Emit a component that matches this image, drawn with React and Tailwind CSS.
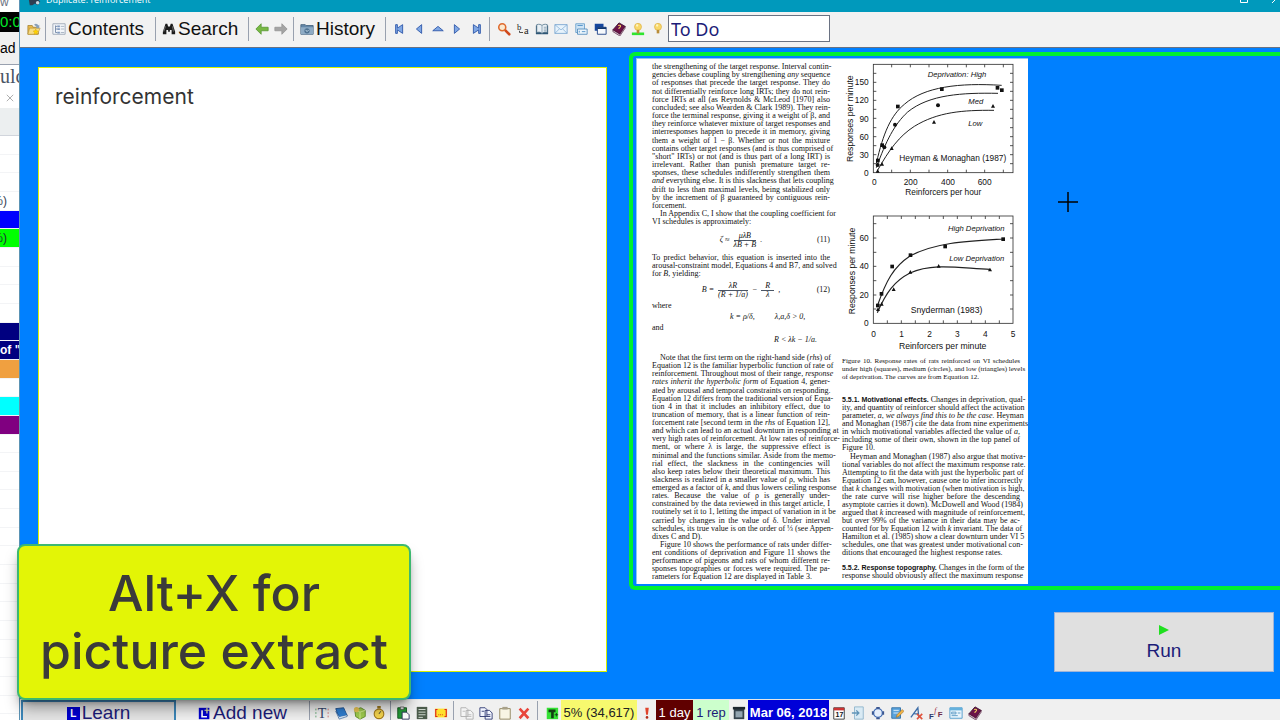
import React, { useState } from 'react';

const Icon = ({ children, size = 'size-[14px]' }) => (
  <svg viewBox="0 0 16 16" className={`${size} shrink-0`} aria-hidden="true">{children}</svg>
);

const FolderIcon = () => (
  <Icon>
    <path d="M1 4h5l1 2h6v8H1z" fill="#e9b949" stroke="#9c7a2a" strokeWidth=".8" />
    <path d="M3 7h12l-3 7H1z" fill="#f7dc83" stroke="#b08a30" strokeWidth=".6" />
    <path d="M8 3c2-2 4-1 5 1l1-1v4h-4l1-1c-1-2-2-2-3-3z" fill="#8aa0b8" />
    <path d="M10 8l1 2 2 .3-1.5 1.5.4 2.2-1.9-1-1.900 1 .4-2.200L7 10.300 9 10z" fill="#ffd500" stroke="#d09a00" strokeWidth=".4" />
  </Icon>
);

const TreeIcon = () => (
  <Icon>
    <path d="M1 2h14v12H1z" fill="#f3f6fa" stroke="#9aa5b5" />
    <path d="M4 4v8M4 5h2M4 8h2M4 12h2" stroke="#7186a3" fill="none" />
    <path d="M6 4h3v2H6zM6 7h3v2H6zM6 11h3v2H6z" fill="#7f98bd" />
    <path d="M10 5h4M10 8h4M10 12h4" stroke="#a3afbf" />
  </Icon>
);

const BinocularsIcon = () => (
  <Icon>
    <path d="M4 2h2l1 3h2l1-3h2l3 9v3h-4V9H9v2H7V9H5v5H1v-3z" fill="#1c1c1c" />
    <path d="M4 5l-2 6M12 5l1 6" stroke="#8b8b8b" strokeWidth=".8" />
  </Icon>
);

const BackIcon = () => (
  <Icon><path d="M1 8l6-6v4h8v4H7v4z" fill="#78b843" stroke="#5c9a38" /></Icon>
);

const ForwardIcon = () => (
  <Icon><path d="M15 8L9 2v4H1v4h8v4z" fill="#a4a4a4" stroke="#979797" /></Icon>
);

const HistoryIcon = () => (
  <Icon>
    <path d="M1 3h5l1 1h8v10H1z" fill="#6487a8" stroke="#48657f" />
    <path d="M1 6h14v8H1z" fill="#8eabc5" />
    <circle cx="8" cy="10" r="3" fill="#4e7292" />
    <path d="M6.500 9l1.500 2 2-2" stroke="#c8dcec" fill="none" />
  </Icon>
);

const NAV_PATHS = [
  ['First', 'M3 3h2v4l6-4v10L5 9v4H3z'],
  ['Previous', 'M11 3v10L5 8z'],
  ['Up', 'M2 10l6-5 6 5z'],
  ['Next', 'M5 3v10l6-5z'],
  ['Last', 'M13 3h-2v4L5 3v10l6-4v4h2z'],
];

const BookIcon = () => (
  <Icon>
    <path d="M8 1l7 4-6 9-8-5z" fill="#6b1248" stroke="#390a28" />
    <path d="M1 9l8 5 6-9v2l-6 9-8-5z" fill="#d9c3d0" stroke="#491033" strokeWidth=".7" />
    <path d="M7 4c3-1 4 1 1 3v1" stroke="#f0d060" strokeWidth="1.300" fill="none" />
  </Icon>
);

const BulbIcon = ({ lit }) => (
  <Icon>
    {lit && <path d="M1 12h14v3H1z" fill="#2fe52f" />}
    <circle cx="8" cy="5.500" r="4" fill="#f8d86a" stroke="#d9a93c" strokeWidth=".7" />
    <path d="M6.500 9h3v4h-3z" fill="#b98c38" />
    <circle cx="7" cy="4" r="1.300" fill="#fff4c0" />
  </Icon>
);

const TOOL_ICONS = [
  ['Find', (
    <Icon key="f">
      <path d="M9 9l5 5" stroke="#d0491c" strokeWidth="3" strokeLinecap="round" />
      <circle cx="6" cy="6" r="4" fill="#fbe9d0" stroke="#df6a2d" strokeWidth="1.800" />
    </Icon>
  )],
  ['Replace', (
    <Icon key="r">
      <text x="1" y="9" fontSize="10" fontFamily="Liberation Serif" fill="#222">b</text>
      <text x="9" y="14" fontSize="12" fontFamily="Liberation Serif" fill="#222">a</text>
      <path d="M4 10v2h4" stroke="#333" fill="none" />
    </Icon>
  )],
  ['Read', (
    <Icon key="o">
      <path d="M1 4h14v10H1z" fill="#2d5675" />
      <path d="M2 3c3-1 5 0 6 1 1-1 3-2 6-1v9c-3-1-5 0-6 1-1-1-3-2-6-1z" fill="#e9f0f5" stroke="#456780" strokeWidth=".8" />
      <path d="M8 4v9M10 6h3M10 8h3M10 10h3" stroke="#718ba0" strokeWidth=".8" />
    </Icon>
  )],
  ['Mail', (
    <Icon key="m">
      <path d="M1 3h14v10H1z" fill="#e7f3fc" stroke="#7ba7d1" />
      <path d="M1 3l7 6 7-6M1 13l5-5M15 13l-5-5" fill="none" stroke="#7ba7d1" strokeWidth=".8" />
    </Icon>
  )],
  ['Templates', (
    <Icon key="t">
      <path d="M2 2h10v10H2z" fill="#cfe4f5" stroke="#6ba0cc" />
      <path d="M4 8h11v6H4z" fill="#edf6fc" stroke="#528cbc" />
      <path d="M4 4h6M6 10v2M9 11h4" stroke="#4c8ec6" />
    </Icon>
  )],
  ['Windows', (
    <Icon key="w">
      <path d="M2 2h10v8H2z" fill="#16479d" />
      <path d="M5 6h10v8H5z" fill="#f5f8fc" stroke="#173c83" />
      <path d="M5 6h10v2H5z" fill="#11376f" />
    </Icon>
  )],
  ['Manual', <BookIcon key="b" />],
  ['Lit hint', <BulbIcon key="l" lit />],
  ['Hint', <BulbIcon key="h" />],
];

const BOTTOM_GROUPS = [
  [
    ['Text', (
      <Icon key="t">
        <text x="3" y="14" fontSize="16" fontFamily="Liberation Serif" fill="#35456a">T</text>
        <path d="M1 3v10" stroke="#58a26a" strokeDasharray="2 2" />
        <path d="M15 3v10" stroke="#d07070" strokeDasharray="2 2" />
      </Icon>
    )],
    ['Books', (
      <Icon key="b">
        <path d="M2 3l9-1 4 9-9 3z" fill="#2f7ed0" stroke="#174a8c" />
        <path d="M6 12l9-2v2l-9 3-4-9z" fill="#d6e8f8" stroke="#174a8c" strokeWidth=".6" />
        <path d="M3 4l8-1 3 7-7 2z" fill="#2f7ed0" />
      </Icon>
    )],
    ['Package', (
      <Icon key="p">
        <path d="M2 4l7-2 5 3v7l-6 3-5-3z" fill="#9fcb4e" stroke="#5d8a25" />
        <path d="M2 4l6 3 6-2M8 7v8" stroke="#d7ef93" fill="none" />
        <circle cx="4" cy="4" r="3" fill="#e8c553" />
      </Icon>
    )],
    ['Timer', (
      <Icon key="c">
        <path d="M6 0h4v3H6z" fill="#9c7a20" />
        <circle cx="8" cy="9" r="5.500" fill="#f4d44d" stroke="#a47c1c" strokeWidth="1.300" />
        <path d="M8 9l2-3" stroke="#333" />
      </Icon>
    )],
  ],
  [
    ['Paste', (
      <Icon key="p">
        <path d="M2 2h10v12H2z" fill="#239a37" stroke="#11501d" />
        <path d="M5 1h4v3H5z" fill="#d8d8d8" stroke="#333" strokeWidth=".6" />
        <path d="M7 7h5l3 3v5H7z" fill="#fff" stroke="#222b55" />
      </Icon>
    )],
    ['Article', (
      <Icon key="a">
        <path d="M2 1h12v14H2z" fill="#4c5c4c" />
        <path d="M4 4h8M4 7h8M4 10h8M4 13h5" stroke="#dfe8df" />
      </Icon>
    )],
    ['Cloze', (
      <Icon key="c">
        <path d="M1 3h14v10H1z" fill="#ffe02a" />
        <path d="M4 4H2v8h2M12 4h2v8h-2" fill="none" stroke="#d22" strokeWidth="1.300" />
        <path d="M5 10h6" stroke="#d22" strokeDasharray="1 1" />
      </Icon>
    )],
  ],
  [
    ['Duplicate', (
      <Icon key="d">
        <path d="M1 2h6l2 2v8H1zM7 5h5l3 3v7H7z" fill="#f4f4f4" stroke="#ababab" />
        <path d="M3 6h3M9 10h4M9 12h4" stroke="#b9b9b9" />
      </Icon>
    )],
    ['Copy', (
      <Icon key="c">
        <path d="M1 2h6l2 2v8H1zM7 5h5l3 3v7H7z" fill="#f2f5ff" stroke="#2a356e" />
        <path d="M3 6h3M9 10h4M9 12h4" stroke="#2a356e" />
      </Icon>
    )],
    ['Clipboard', (
      <Icon key="b">
        <path d="M2 3h12v12H2z" fill="#f8f5e4" stroke="#8d8158" />
        <path d="M5 1h6v3H5z" fill="#a8a18a" />
      </Icon>
    )],
    ['Delete', (
      <Icon key="x"><path d="M3 3l10 11M13 3L3 14" stroke="#e8453c" strokeWidth="3" /></Icon>
    )],
  ],
];

const END_ICONS = [
  ['Calendar', (
    <Icon key="c">
      <path d="M2 2h12v13H2z" fill="#fff" stroke="#333" />
      <path d="M2 2h12v3H2z" fill="#c33" />
      <text x="4" y="13" fontSize="8" fontWeight="bold" fontFamily="Liberation Sans" fill="#111">17</text>
    </Icon>
  )],
  ['Import', (
    <Icon key="i">
      <path d="M4 1h10v14H4z" fill="#d9eaf4" stroke="#8eb4cc" />
      <path d="M1 8h7M6 5l3 3-3 3" stroke="#5f94b8" fill="none" strokeWidth="1.500" />
    </Icon>
  )],
  ['Target', (
    <Icon key="t">
      <circle cx="8" cy="8" r="5" fill="#e5eefb" stroke="#3d69b3" strokeWidth="1.500" />
      <path d="M6 1h4v2H6zM6 13h4v2H6zM1 6h2v4H1zM13 6h2v4h-2z" fill="#3b568f" />
    </Icon>
  )],
  ['Edit', (
    <Icon key="e">
      <path d="M2 2h10v12H2z" fill="#5ba4dd" stroke="#2e6ea5" />
      <path d="M4 5h6M4 8h6" stroke="#e3f1fb" />
      <path d="M7 13l1-3 6-6 2 2-6 6z" fill="#f0b345" stroke="#94672a" strokeWidth=".6" />
    </Icon>
  )],
  ['Clear font', (
    <Icon key="a">
      <path d="M1 13L9 2l1 11M5 9h5" fill="none" stroke="#3d6da8" strokeWidth="1.500" />
      <path d="M8 9l6 6M14 9l-6 6" stroke="#e0523c" strokeWidth="1.800" />
    </Icon>
  )],
  ['Fonts', (
    <Icon key="f">
      <text x="0" y="15" fontSize="9" fontWeight="bold" fontFamily="Liberation Sans" fill="#2b3569">F</text>
      <text x="6" y="8" fontSize="9" fontStyle="italic" fontFamily="Liberation Serif" fill="#9b2b4a">f</text>
      <text x="10" y="12" fontSize="9" fontWeight="bold" fontFamily="Liberation Sans" fill="#6d2b4a">F</text>
    </Icon>
  )],
  ['Layout', (
    <Icon key="l">
      <path d="M1 2h14v12H1z" fill="#e8f4fc" stroke="#4c9acb" />
      <path d="M1 2h14v3H1z" fill="#65b1dd" />
      <path d="M3 7h5v2H3zM3 11h7M10 8h3" stroke="#5797c2" fill="none" />
    </Icon>
  )],
  ['Help', <BookIcon key="h" />],
];

const SIDE_ROWS = Array.from({ length: 32 }, () => ({ cls: 'bg-white', text: '' }));
SIDE_ROWS[3] = { cls: 'justify-end bg-white pr-3 text-gray-700', text: '%)' };
SIDE_ROWS[4] = { cls: 'bg-[#0000ff]', text: '' };
SIDE_ROWS[5] = { cls: 'justify-end bg-[#00ff00] pr-3 text-gray-800', text: '%)' };
SIDE_ROWS[10] = { cls: 'bg-[#000080]', text: '' };
SIDE_ROWS[11] = { cls: 'bg-[#000080] font-bold text-white', text: 'of "' };
SIDE_ROWS[12] = { cls: 'bg-[#f0a040]', text: '' };
SIDE_ROWS[14] = { cls: 'bg-[#00ffff]', text: '' };
SIDE_ROWS[15] = { cls: 'bg-[#800080]', text: '' };

const Sidebar = () => (
  <aside className="flex w-5 shrink-0 flex-col overflow-hidden border-r border-[#5a93b5] bg-white">
    <div className="h-3 text-[12px] leading-[4px] text-gray-500">w</div>
    <div className="h-5 overflow-hidden bg-black text-[15px] leading-5 whitespace-nowrap text-[#00e828]">0:0</div>
    <div className="flex h-8 items-center bg-[#f0f0f0] text-[14px] text-black">ad</div>
    <div className="flex h-6 items-end overflow-hidden border-t border-gray-400 font-['Liberation_Serif',serif] text-[20px] leading-6 text-gray-600">ulc</div>
    <div className="flex h-5 items-center justify-center">
      <svg viewBox="0 0 10 10" className="size-2" aria-hidden="true">
        <path d="M1 1l8 8M9 1L1 9" stroke="#999" />
      </svg>
    </div>
    <div className="h-7 shrink-0 border-b border-gray-300 bg-[#eceff0]" />
    <div className="-mb-[13px] flex flex-1 flex-col">
      {SIDE_ROWS.map((row, i) => (
        <div key={i} className={`flex flex-1 items-center overflow-hidden border-b border-gray-100 text-[12px] leading-4 whitespace-nowrap ${row.cls}`}>
          {row.text}
        </div>
      ))}
    </div>
  </aside>
);

const Group = ({ className, children }) => (
  <div className={`flex h-6 shrink-0 items-center border-r border-gray-400 ${className}`}>{children}</div>
);

const IconButton = ({ label, children, className = '' }) => (
  <button type="button" aria-label={label} className={`flex w-[19px] shrink-0 items-center justify-center ${className}`}>
    {children}
  </button>
);

const Toolbar = ({ title, onTitleChange }) => (
  <div className="flex h-9 shrink-0 items-center border-b border-gray-500 bg-[#f2f2f2] pb-0.5 text-[19px] leading-6 text-[#111]">
    <Group className="w-[26px] pl-1"><IconButton label="Open"><FolderIcon /></IconButton></Group>
    <Group className="w-[110px] pl-1.5">
      <button type="button" className="flex items-center gap-0.5"><TreeIcon />Contents</button>
    </Group>
    <Group className="w-[93px] pl-1.5">
      <button type="button" className="flex items-center gap-0.5"><BinocularsIcon />Search</button>
    </Group>
    <Group className="w-[45px] justify-center">
      <IconButton label="Back"><BackIcon /></IconButton>
      <IconButton label="Forward"><ForwardIcon /></IconButton>
    </Group>
    <Group className="w-[92px] pl-1.5">
      <button type="button" className="flex items-center gap-0.5"><HistoryIcon />History</button>
    </Group>
    <Group className="w-[104px] pl-1">
      {NAV_PATHS.map(([label, d]) => (
        <IconButton key={label} label={label}>
          <Icon><path d={d} fill="#7fa7e4" stroke="#2b55a8" /></Icon>
        </IconButton>
      ))}
    </Group>
    <div className="flex w-[178px] shrink-0 justify-between pr-px pl-1">
      {TOOL_ICONS.map(([label, icon]) => <IconButton key={label} label={label}>{icon}</IconButton>)}
    </div>
    <input
      aria-label="Title"
      value={title}
      onChange={(e) => onTitleChange(e.target.value)}
      className="h-[27px] w-[162px] border border-gray-500 bg-white px-0.5 font-['Noto_Sans',sans-serif] text-[18px] text-[#1c1c78]"
    />
  </div>
);

// One printed line per entry; the last line of a paragraph may be short.
const Lines = ({ lines, indent, ragged, className = '' }) => (
  <p className={`flex flex-col justify-between ${className}`}>
    {lines.map((line, i) => (
      <span
        key={i}
        className={`block h-2 whitespace-nowrap ${indent && i === 0 ? 'pl-2' : ''} ${ragged && i === lines.length - 1 ? '' : '[text-align-last:justify]'}`}
      >
        {line}
      </span>
    ))}
  </p>
);

const RunIn = ({ children }) => (
  <b className="font-['Liberation_Sans',sans-serif] text-[7px]">{children}</b>
);

const Fraction = ({ top, bottom }) => (
  <span className="inline-flex flex-col text-center">
    <span className="border-b border-gray-600 px-1">{top}</span>
    <span>{bottom}</span>
  </span>
);

const Equation = ({ number, children, className }) => (
  <div className={`grid grid-cols-[1fr_auto_1fr] items-center ${className}`}>
    <span />
    <span className="flex items-center gap-1 italic">{children}</span>
    <span className="text-right">({number})</span>
  </div>
);

const P1 = [
  'the strengthening of the target response. Interval contin-',
  <>gencies debase coupling by strengthening <i>any</i> sequence</>,
  'of responses that precede the target response. They do',
  'not differentially reinforce long IRTs; they do not rein-',
  'force IRTs at all (as Reynolds & McLeod [1970] also',
  'concluded; see also Wearden & Clark 1989). They rein-',
  'force the terminal response, giving it a weight of β, and',
  'they reinforce whatever mixture of target responses and',
  'interresponses happen to precede it in memory, giving',
  'them a weight of 1 − β. Whether or not the mixture',
  'contains other target responses (and is thus comprised of',
  '"short" IRTs) or not (and is thus part of a long IRT) is',
  'irrelevant. Rather than punish premature target re-',
  'sponses, these schedules indifferently strengthen them',
  <><i>and</i> everything else. It is this slackness that lets coupling</>,
  'drift to less than maximal levels, being stabilized only',
  'by the increment of β guaranteed by contiguous rein-',
  'forcement.',
];

const P2 = [
  'In Appendix C, I show that the coupling coefficient for',
  'VI schedules is approximately:',
];

const P3 = [
  'To predict behavior, this equation is inserted into the',
  'arousal-constraint model, Equations 4 and B7, and solved',
  <>for <i>B</i>, yielding:</>,
];

const P4 = [
  <>Note that the first term on the right-hand side (<i>rhs</i>) of</>,
  'Equation 12 is the familiar hyperbolic function of rate of',
  <>reinforcement. Throughout most of their range, <i>response</i></>,
  <><i>rates inherit the hyperbolic form</i> of Equation 4, gener-</>,
  'ated by arousal and temporal constraints on responding.',
  'Equation 12 differs from the traditional version of Equa-',
  'tion 4 in that it includes an inhibitory effect, due to',
  'truncation of memory, that is a linear function of rein-',
  <>forcement rate [second term in the <i>rhs</i> of Equation 12],</>,
  'and which can lead to an actual downturn in responding at',
  'very high rates of reinforcement. At low rates of reinforce-',
  'ment, or where λ is large, the suppressive effect is',
  'minimal and the functions similar. Aside from the memo-',
  'rial effect, the slackness in the contingencies will',
  'also keep rates below their theoretical maximum. This',
  'slackness is realized in a smaller value of ρ, which has',
  <>emerged as a factor of <i>k</i>, and thus lowers ceiling response</>,
  'rates. Because the value of ρ is generally under-',
  'constrained by the data reviewed in this target article, I',
  'routinely set it to 1, letting the impact of variation in it be',
  'carried by changes in the value of δ. Under interval',
  'schedules, its true value is on the order of ⅓ (see Appen-',
  'dixes C and D).',
];

const P5 = [
  'Figure 10 shows the performance of rats under differ-',
  'ent conditions of deprivation and Figure 11 shows the',
  'performance of pigeons and rats of whom different re-',
  'sponses topographies or forces were required. The pa-',
  'rameters for Equation 12 are displayed in Table 3.',
];

const CAPTION = [
  'Figure 10.   Response rates of rats reinforced on VI schedules',
  'under high (squares), medium (circles), and low (triangles) levels',
  'of deprivation. The curves are from Equation 12.',
];

const P6 = [
  <><RunIn>5.5.1. Motivational effects.</RunIn> Changes in deprivation, qual-</>,
  'ity, and quantity of reinforcer should affect the activation',
  <>parameter, <i>a</i>, <i>we always find this to be the case.</i> Heyman</>,
  'and Monaghan (1987) cite the data from nine experiments',
  <>in which motivational variables affected the value of <i>a</i>,</>,
  'including some of their own, shown in the top panel of',
  'Figure 10.',
];

const P7 = [
  'Heyman and Monaghan (1987) also argue that motiva-',
  'tional variables do not affect the maximum response rate.',
  'Attempting to fit the data with just the hyperbolic part of',
  'Equation 12 can, however, cause one to infer incorrectly',
  <>that <i>k</i> changes with motivation (when motivation is high,</>,
  'the rate curve will rise higher before the descending',
  'asymptote carries it down). McDowell and Wood (1984)',
  <>argued that <i>k</i> increased with magnitude of reinforcement,</>,
  'but over 99% of the variance in their data may be ac-',
  <>counted for by Equation 12 with <i>k</i> invariant. The data of</>,
  'Hamilton et al. (1985) show a clear downturn under VI 5',
  'schedules, one that was greatest under motivational con-',
  'ditions that encouraged the highest response rates.',
];

const P8 = [
  <><RunIn>5.5.2. Response topography.</RunIn> Changes in the form of the</>,
  'response should obviously affect the maximum response',
];

const Square = ({ x, y }) => <rect x={x - 5} y={y - 5} width="11" height="11" fill="#111" />;
const Dot = ({ x, y }) => <circle cx={x} cy={y} r="6" fill="#111" />;
const Triangle = ({ x, y }) => <path d={`M${x} ${y - 6}l6 11h-12z`} fill="#111" />;

const Frame = ({ top, bottom, xTicks, yTicks }) => (
  <g stroke="#333" strokeWidth="2.500" fill="none">
    <rect x="112" y={top} width="419" height={bottom - top} />
    {xTicks.map((x) => <path key={x} d={`M${x} ${top}v9M${x} ${bottom}v-9`} />)}
    {yTicks.map((y) => <path key={y} d={`M112 ${y}h9M531 ${y}h-9`} />)}
  </g>
);

const HeymanChart = () => (
  <svg viewBox="18 9 540 426" className="h-[142px] w-[180px] font-['Liberation_Sans',sans-serif] text-[25px]" fill="#111" role="img" aria-label="Heyman & Monaghan (1987)">
    <Frame top={25} bottom={350} xTicks={[167, 223, 279, 335, 391, 446, 502]} yTicks={[52, 79, 106, 133, 160, 187, 215, 242, 269, 296, 323]} />
    <g textAnchor="end">
      <text x="98" y="88">150</text>
      <text x="98" y="142">120</text>
      <text x="98" y="197">90</text>
      <text x="98" y="251">60</text>
      <text x="98" y="305">30</text>
      <text x="98" y="359">0</text>
    </g>
    <g textAnchor="middle">
      <text x="115" y="386">0</text>
      <text x="224" y="386">200</text>
      <text x="336" y="386">400</text>
      <text x="446" y="386">600</text>
      <text x="322" y="416">Reinforcers per hour</text>
      <text transform="translate(50 188) rotate(-90)" className="text-[26px]">Responses per minute</text>
    </g>
    <g fill="none" stroke="#222" strokeWidth="3">
      <path d="M121 322C142 230 165 178 205 145C265 92 370 80 497 88" />
      <path d="M121 335C150 255 175 205 215 168C280 115 380 110 486 112" />
      <path d="M123 346C160 280 190 240 235 211C305 168 380 162 474 163" />
    </g>
    <text x="275" y="62" fontStyle="italic" className="text-[23px]">Deprivation:  High</text>
    <text x="397" y="143" fontStyle="italic" className="text-[23px]">Med</text>
    <text x="397" y="211" fontStyle="italic" className="text-[23px]">Low</text>
    <text x="190" y="316" className="text-[25px]">Heyman & Monaghan (1987)</text>
    <Square x={125} y={313} /><Square x={138} y={267} /><Square x={185} y={151} />
    <Square x={317} y={99} /><Square x={484} y={95} /><Square x={497} y={102} />
    <Dot x={125} y={327} /><Dot x={145} y={274} /><Dot x={177} y={206} /><Dot x={306} y={148} />
    <Triangle x={125} y={345} /><Triangle x={138} y={324} /><Triangle x={167} y={277} />
    <Triangle x={294} y={198} /><Triangle x={471} y={150} />
  </svg>
);

const SnydermanChart = () => (
  <svg viewBox="18 12 540 426" className="h-[142px] w-[180px] font-['Liberation_Sans',sans-serif] text-[25px]" fill="#111" role="img" aria-label="Snyderman (1983)">
    <Frame top={30} bottom={352} xTicks={[154, 196, 238, 280, 322, 364, 406, 448, 490]} yTicks={[53, 96, 139, 181, 224, 267, 309]} />
    <g textAnchor="end">
      <text x="98" y="105">60</text>
      <text x="98" y="190">40</text>
      <text x="98" y="276">20</text>
      <text x="98" y="361">0</text>
    </g>
    <g textAnchor="middle">
      <text x="113" y="392">0</text>
      <text x="197" y="392">1</text>
      <text x="281" y="392">2</text>
      <text x="364" y="392">3</text>
      <text x="448" y="392">4</text>
      <text x="531" y="392">5</text>
      <text x="320" y="428" className="text-[26px]">Reinforcers per minute</text>
      <text transform="translate(56 195) rotate(-90)" className="text-[26px]">Responses per minute</text>
    </g>
    <g fill="none" stroke="#222" strokeWidth="3.500">
      <path d="M124 300C150 225 172 183 222 150C300 108 400 105 502 99" />
      <path d="M124 320C150 260 175 225 222 201C290 170 370 186 462 190" />
    </g>
    <text x="336" y="74" fontStyle="italic" className="text-[23px]">High Deprivation</text>
    <text x="340" y="164" fontStyle="italic" className="text-[23px]">Low Deprivation</text>
    <text x="224" y="321" className="text-[26px]">Snyderman (1983)</text>
    <Square x={125} y={298} /><Square x={136} y={263} /><Square x={168} y={181} />
    <Square x={223} y={147} /><Square x={327} y={121} /><Square x={501} y={99} />
    <Triangle x={126} y={310} /><Triangle x={137} y={294} /><Triangle x={173} y={250} />
    <Triangle x={223} y={198} /><Triangle x={308} y={180} /><Triangle x={462} y={191} />
  </svg>
);

const Paper = () => (
  <article className="flex w-[392px] gap-3 border-t border-l border-[#8cc8f5] bg-white px-[15px] pt-1 pb-[3px] font-['Liberation_Serif',serif] text-[8px] leading-2 text-[#111]">
    <div className="flex w-[178px] shrink-0 flex-col">
      <Lines lines={P1} ragged className="h-[147px]" />
      <Lines lines={P2} indent ragged className="h-4" />
      <Equation number="11" className="my-1 h-5">ζ ≈ <Fraction top="μλB" bottom="λB + B" />.</Equation>
      <Lines lines={P3} ragged />
      <Equation number="12" className="h-6">
        B = <Fraction top="λR" bottom="(R + 1/a)" /> − <Fraction top="R" bottom="λ" />,
      </Equation>
      <p>where</p>
      <p className="mt-[3px] flex gap-5 pl-[78px] italic"><span>k = ρ/δ,</span><span>λ,a,δ {'>'} 0,</span></p>
      <p className="mt-[3px]">and</p>
      <p className="mt-1 pl-[122px] italic">R {'<'} λk − 1/a.</p>
      <Lines lines={P4} indent ragged className="mt-[10px] h-[187px]" />
      <Lines lines={P5} indent ragged />
    </div>
    <div className="flex w-[178px] shrink-0 flex-col">
      <div className="-mt-1 flex flex-col gap-[9px]">
        <HeymanChart />
        <SnydermanChart />
      </div>
      <Lines lines={CAPTION} ragged className="mt-[5px] text-[7px]" />
      <Lines lines={P6} ragged className="mt-[15px]" />
      <Lines lines={P7} indent ragged className="mt-px" />
      <Lines lines={P8} className="mt-[7px]" />
    </div>
  </article>
);

const BottomBar = () => (
  <div className="h-[21px] shrink-0 overflow-hidden border-t border-gray-200 bg-[#f0f0f0]">
    <div className="flex h-[26px] items-center text-[13px] text-[#1c1c78]">
      <button type="button" className="ml-px flex h-[26px] w-[155px] shrink-0 items-center justify-center gap-0.5 border-2 border-[#3c86b8] bg-[#e4e4e4] text-[19px]">
        <span className="flex size-[13px] items-center justify-center bg-[#0000d0] text-[10px] font-bold text-white">L</span>
        Learn
      </button>
      <Group className="w-[134px] justify-center">
        <button type="button" className="flex items-center gap-0.5 text-[19px]">
          <Icon size="size-[13px]">
            <path d="M1 1h13v14H1z" fill="#0000d0" />
            <path d="M5 4v8h6" fill="none" stroke="#fff" strokeWidth="2" />
            <path d="M11 1v7M8 4h7" stroke="#e8e8a0" strokeWidth="1.500" />
          </Icon>
          Add new
        </button>
      </Group>
      <Group className="w-[81px] justify-center">
        {BOTTOM_GROUPS[0].map(([label, icon]) => <IconButton key={label} label={label}>{icon}</IconButton>)}
      </Group>
      <Group className="w-[63px] justify-center">
        {BOTTOM_GROUPS[1].map(([label, icon]) => <IconButton key={label} label={label}>{icon}</IconButton>)}
      </Group>
      <Group className="w-[84px] justify-center">
        {BOTTOM_GROUPS[2].map(([label, icon]) => <IconButton key={label} label={label}>{icon}</IconButton>)}
      </Group>
      <IconButton label="Topic" className="ml-1">
        <Icon>
          <path d="M2 2h13v13H2z" fill="#35e135" />
          <path d="M4 4h8v3h-2v7H7V7H4z" fill="#133f13" />
          <path d="M11 10h4M13 8v4" stroke="#133f13" />
        </Icon>
      </IconButton>
      <span className="flex h-[26px] w-[76px] shrink-0 items-center justify-center bg-[#f7f96e] text-[#222]">5% (34,617)</span>
      <IconButton label="Priority">
        <Icon><path d="M6 2h4l-1 8H7z" fill="#e0442c" /><circle cx="8" cy="13" r="1.500" fill="#b22d1b" /></Icon>
      </IconButton>
      <span className="flex h-[26px] w-[37px] shrink-0 items-center justify-center bg-[#600000] text-white">1 day</span>
      <span className="flex h-[26px] w-[36px] shrink-0 items-center justify-center bg-[#ccffcc]">1 rep</span>
      <IconButton label="Archive">
        <Icon>
          <path d="M2 2h12v13H2z" fill="#35424d" />
          <path d="M1 1h14v3H1z" fill="#1d262e" />
          <path d="M4 6h8v7H4z" fill="#93a4b0" />
        </Icon>
      </IconButton>
      <span className="flex h-[26px] w-[81px] shrink-0 items-center justify-center bg-[#0000d8] font-bold text-white">Mar 06, 2018</span>
      <div className="flex w-[156px] shrink-0 justify-between">
        {END_ICONS.map(([label, icon]) => <IconButton key={label} label={label}>{icon}</IconButton>)}
      </div>
    </div>
  </div>
);

const App = () => {
  const [title, setTitle] = useState('To Do');

  return (
    <div className="relative flex h-screen overflow-hidden bg-white font-['Liberation_Sans',sans-serif]">
      <Sidebar />
      <main className="flex min-w-0 flex-1 flex-col">
        <header className="flex h-3 shrink-0 justify-between overflow-hidden bg-[#0099bc] pl-2">
          <div className="flex h-0 items-center gap-1 font-['Open_Sans',sans-serif] text-[9px] text-white">
            <Icon><path d="M1 8h6l2-3 5 5-3 4-3-2-3 2H2z" fill="#2d3e50" /><circle cx="11" cy="11" r="2" fill="#c8d8e0" /></Icon>
            <span>Duplicate: reinforcement</span>
          </div>
          <svg viewBox="0 0 40 12" className="h-3 w-10" fill="none" stroke="#fff" aria-hidden="true">
            <path d="M.5-4v6.500h7V-4M32 3l7-7" />
          </svg>
        </header>
        <Toolbar title={title} onTitleChange={setTitle} />
        <div className="grid min-h-0 flex-1 grid-cols-[minmax(0,569fr)_minmax(0,651fr)] gap-[22px] overflow-hidden bg-[#0080ff] pl-[18px]">
          <section className="mt-[19px] mb-[27px] border border-[#d8f000] bg-white px-4 py-[17px]">
            <p className="font-['Inter',sans-serif] text-[21px] leading-6 text-[#333]">reinforcement</p>
          </section>
          <section className="flex flex-col pt-1">
            <div className="rounded-l-md border-4 border-r-0 border-[#00f030] p-0.5 pl-[3px]">
              <Paper />
            </div>
            <button type="button" className="mt-[22px] mr-[6px] flex h-[60px] w-[220px] flex-col items-center justify-center self-end border border-[#9fb4d8] bg-[#e0e0e0] text-[19px] leading-6 text-[#1c1c78]">
              <svg viewBox="0 0 10 10" className="mt-1 size-[10px]" aria-hidden="true">
                <path d="M0 0l10 5-10 5z" fill="#20e020" />
              </svg>
              <span className="mt-1">Run</span>
            </button>
          </section>
        </div>
        <BottomBar />
      </main>

      <svg viewBox="0 0 20 20" className="absolute top-48 left-[1058px] size-5" aria-hidden="true">
        <path d="M10 0v20M0 10h20" stroke="#000" strokeWidth="1.500" />
      </svg>
      <div className="absolute bottom-5 left-[17px] flex h-[156px] w-[394px] items-center justify-center rounded-lg border-2 border-[#3db870] bg-[#e3f506] text-center font-['Inter',sans-serif] text-[50px] leading-[58px] font-medium text-[#3a3a3a] shadow-lg shadow-black/40">
        <p>Alt+X for<br />picture extract</p>
      </div>
    </div>
  );
};

export default App;
